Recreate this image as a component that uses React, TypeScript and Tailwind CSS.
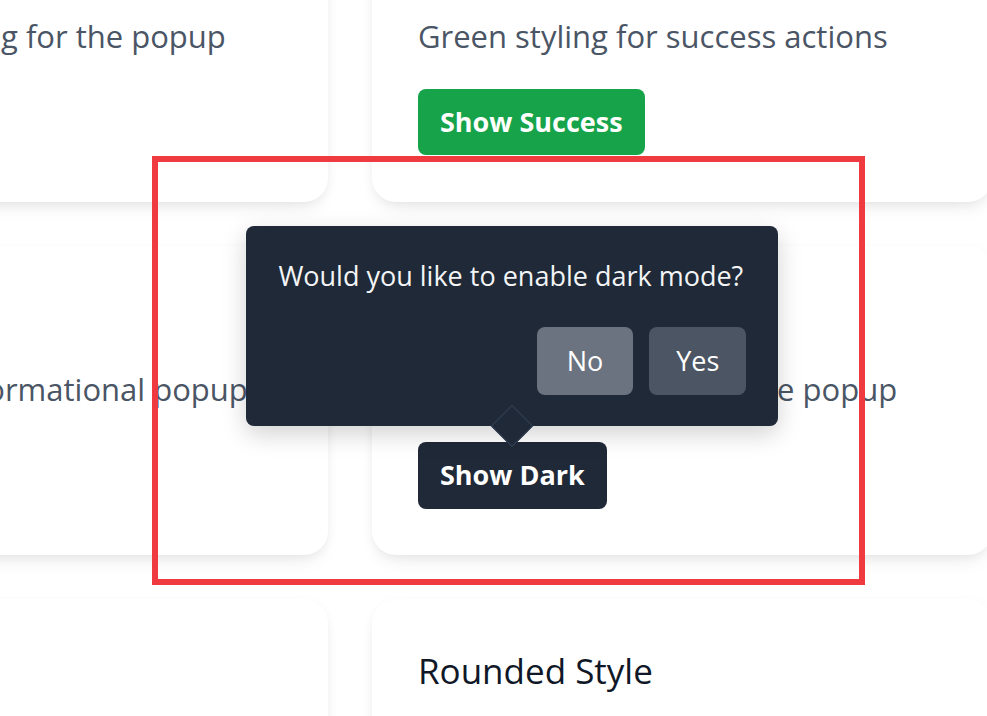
import React from "react";

const font = { fontFamily: '"Open Sans", "Noto Sans", sans-serif' };

function Card({
  title,
  desc,
  children,
}: {
  title: string;
  desc: string;
  children?: React.ReactNode;
}) {
  return (
    <div className="rounded-3xl bg-white p-[46px] shadow-[0_2px_10px_rgba(0,0,0,0.04),0_10px_18px_-6px_rgba(0,0,0,0.09)]">
      <h3 className="mb-[23px] whitespace-nowrap text-[35px] leading-[52px] text-gray-900">{title}</h3>
      <p className="whitespace-nowrap text-[31px] leading-[45px] text-gray-600">{desc}</p>
      <div className="mt-[30px] h-[67px]">{children}</div>
    </div>
  );
}

export default function App() {
  return (
    <div className="relative h-[716px] w-[987px] overflow-hidden bg-white" style={font}>
      <div className="ml-[-320px] mt-[-107px] grid grid-cols-[648px_620px] gap-[44px]">
        <Card title="Default Style" desc="Clean default styling for the popup">
          <button className="h-[66px] rounded-lg bg-blue-600 px-[22px] text-[27px] font-bold text-white">
            Show Default
          </button>
        </Card>
        <Card title="Success Style" desc="Green styling for success actions">
          <button className="h-[66px] rounded-lg bg-[#16a34a] px-[22px] text-[27px] font-bold text-white">
            Show Success
          </button>
        </Card>
        <Card title="Info Style" desc="Blue styling for informational popup">
          <button className="h-[67px] rounded-lg bg-sky-600 px-[22px] text-[27px] font-bold text-white">
            Show Info
          </button>
        </Card>
        <Card title="Dark Style" desc="Dark theme styling for the popup">
          <div className="relative inline-block">
            <div className="absolute bottom-full left-1/2 z-10 mb-4 w-[532px] -translate-x-1/2 rounded-lg bg-[#1f2937] px-8 pb-[31px] pt-8 shadow-[0_8px_24px_rgba(0,0,0,0.18)]">
              <p className="whitespace-nowrap text-[27px] leading-[36px] text-gray-100">
                Would you like to enable dark mode?
              </p>
              <div className="mt-[33px] flex justify-end gap-4">
                <button className="h-[68px] rounded-lg bg-[#6b7280] px-[30px] text-[27px] text-white">No</button>
                <button className="h-[68px] rounded-lg bg-[#4b5563] px-[27px] text-[27px] text-white">Yes</button>
              </div>
              <div className="absolute left-1/2 top-full h-[30px] w-[30px] -translate-x-1/2 -translate-y-1/2 rotate-45 border border-[#334155] bg-[#1f2937]" />
            </div>
            <button className="h-[67px] rounded-lg bg-[#1f2937] px-[22px] text-[27px] font-bold text-white">
              Show Dark
            </button>
          </div>
        </Card>
        <Card title="Large Size" desc="Bigger popup with more room">
          <button className="h-[67px] rounded-lg bg-purple-600 px-[22px] text-[27px] font-bold text-white">
            Show Large
          </button>
        </Card>
        <Card title="Rounded Style" desc="Extra rounded corners for the popup">
          <button className="h-[67px] rounded-full bg-pink-600 px-[22px] text-[27px] font-bold text-white">
            Show Rounded
          </button>
        </Card>
      </div>
      <div className="pointer-events-none absolute left-[152px] top-[156px] h-[429px] w-[713px] border-[6px] border-[#ef3b3f]" />
    </div>
  );
}
